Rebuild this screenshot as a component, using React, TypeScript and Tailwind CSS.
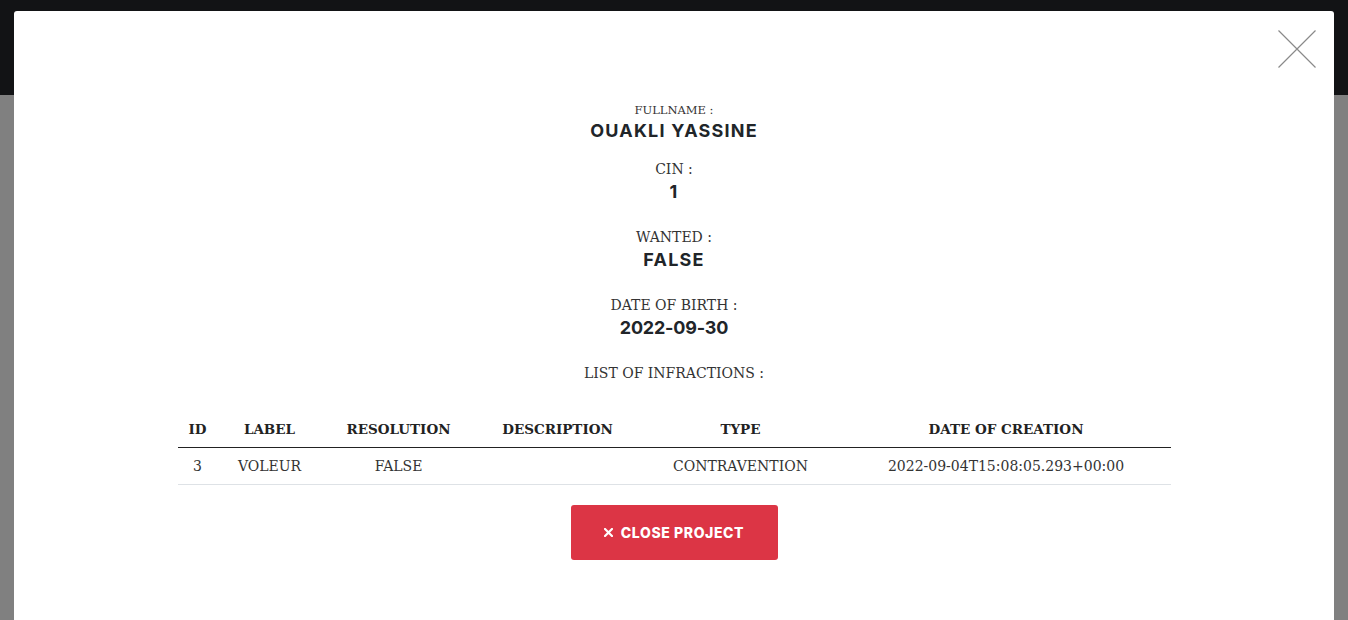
const rows = [
  { id: 3, label: "VOLEUR", resolution: "FALSE", description: "", type: "CONTRAVENTION", date: "2022-09-04T15:08:05.293+00:00" },
];

const cols = [
  { key: "ID", w: "w-[40px]" },
  { key: "LABEL", w: "w-[104px]" },
  { key: "RESOLUTION", w: "w-[154px]" },
  { key: "DESCRIPTION", w: "w-[164px]" },
  { key: "TYPE", w: "w-[202px]" },
  { key: "DATE OF CREATION", w: "w-[329px]" },
];

const slab = "font-['DejaVu_Serif',serif]";
const bold = "font-['Inter','Noto_Sans',sans-serif]";

function Field({ label, value, small, track = "tracking-[1.2px]" }: { label: string; value: string; small?: boolean; track?: string }) {
  return (
    <div className="flex flex-col items-center">
      <div className={`${slab} text-[#333] ${small ? "text-[11.5px] leading-[18px]" : "text-[14px] leading-[22px]"}`}>
        {label}
      </div>
      <div className={`${bold} text-[18px] leading-[24px] font-bold text-[#212529] ${track}`}>{value}</div>
    </div>
  );
}

export default function App() {
  return (
    <div className="relative w-full h-[620px] overflow-hidden bg-[#808080]">
      <div className="h-[95px] bg-[#121315]" />

      {/* Modal */}
      <div className="absolute left-[14px] top-[11px] w-[1320px] h-[640px] bg-white rounded-[3px]">
        <button className="absolute left-[1264px] top-[19px] w-[38px] h-[38px]">
          <svg width="38" height="38" viewBox="0 0 38 38">
            <path d="M0.5 0.5 L37.5 37.5 M37.5 0.5 L0.5 37.5" stroke="#8a8a8a" strokeWidth="1.2" fill="none" />
          </svg>
        </button>

        <div className="flex flex-col items-center pt-[90px]">
          <Field label="FULLNAME :" value="OUAKLI YASSINE" small />
          <div className="mt-[15px] flex flex-col gap-[22px] items-center">
            <Field label="CIN :" value="1" />
            <Field label="WANTED :" value="FALSE" />
            <Field label="DATE OF BIRTH :" value="2022-09-30" track="tracking-[-0.2px]" />
            <div className={`${slab} text-[14px] leading-[22px] text-[#333]`}>LIST OF INFRACTIONS :</div>
          </div>

          <table className="mt-[27px] w-[993px] border-collapse text-[14px]">
            <thead>
              <tr className="border-b border-[#222]">
                {cols.map((c) => (
                  <th key={c.key} className={`${c.w} ${slab} text-[13.5px] font-bold text-[#222] h-[36px] leading-[20px] text-center`}>
                    {c.key}
                  </th>
                ))}
              </tr>
            </thead>
            <tbody>
              {rows.map((r) => (
                <tr key={r.id} className="border-b border-[#dee2e6]">
                  {[r.id, r.label, r.resolution, r.description, r.type, r.date].map((v, i) => (
                    <td key={i} className={`${slab} text-[#333] h-[37px] leading-[20px] text-center`}>
                      {v}
                    </td>
                  ))}
                </tr>
              ))}
            </tbody>
          </table>

          <button className="mt-[20px] w-[207px] h-[55px] bg-[#dc3545] rounded-[3px] flex items-center justify-center gap-[8px] text-white">
            <svg width="9" height="9" viewBox="0 0 9 9">
              <path d="M1 1 L8 8 M8 1 L1 8" stroke="white" strokeWidth="2.2" strokeLinecap="square" />
            </svg>
            <span className={`${bold} text-[14px] font-extrabold tracking-[0.6px]`}>CLOSE PROJECT</span>
          </button>
        </div>
      </div>
    </div>
  );
}
